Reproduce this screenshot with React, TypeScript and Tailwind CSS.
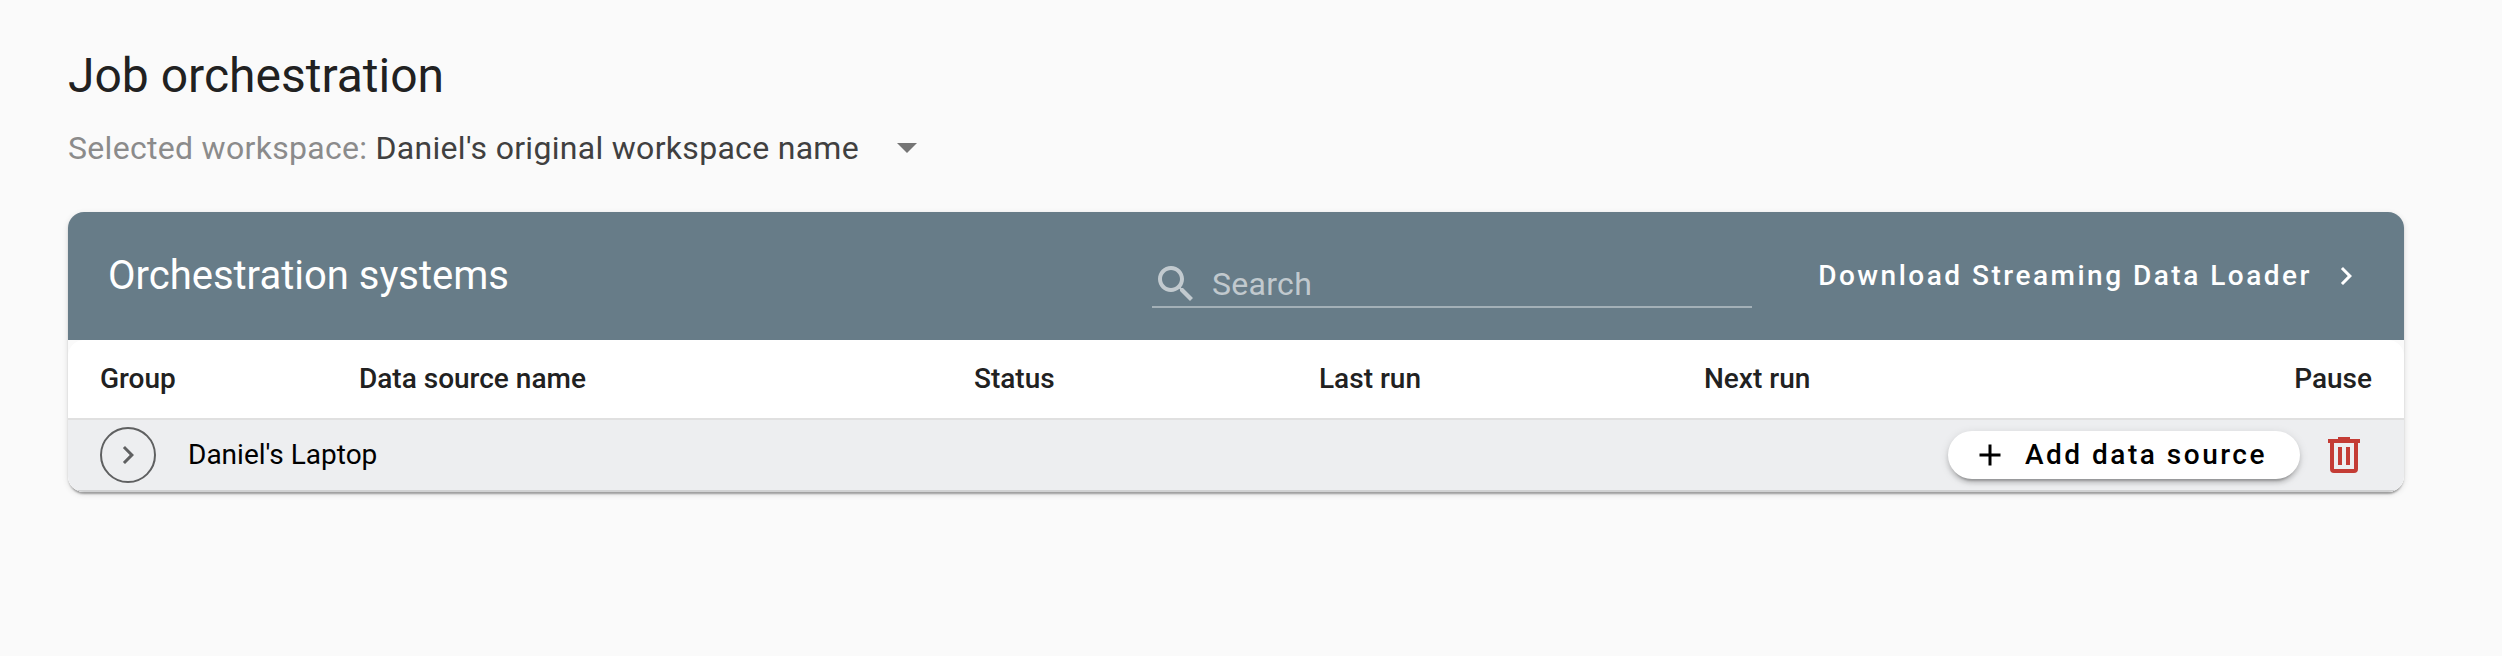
import type { ReactNode } from "react";

function Icon({ path, className }: { path: string; className: string }) {
  return (
    <svg viewBox="0 0 24 24" fill="currentColor" aria-hidden="true" className={className}>
      <path d={path} />
    </svg>
  );
}

const icons = {
  search:
    "M15.5 14h-.79l-.28-.27C15.41 12.59 16 11.11 16 9.5 16 5.91 13.09 3 9.5 3S3 5.91 3 9.5 5.91 16 9.5 16c1.61 0 3.09-.59 4.23-1.57l.27.28v.79l5 4.99L20.49 19l-4.99-5zm-6 0C7.01 14 5 11.99 5 9.5S7.01 5 9.5 5 14 7.01 14 9.5 11.99 14 9.5 14z",
  chevron: "M10 6L8.59 7.41 13.17 12l-4.58 4.59L10 18l6-6z",
  plus: "M19 13h-6v6h-2v-6H5v-2h6V5h2v6h6v2z",
  trash:
    "M9 3v1H4v2h1v13a2 2 0 0 0 2 2h10a2 2 0 0 0 2-2V6h1V4h-5V3H9M7 6h10v13H7V6m2 2v9h2V8H9m4 0v9h2V8h-2z",
};

function HeaderCell({ children, className = "" }: { children: ReactNode; className?: string }) {
  return <div className={`whitespace-nowrap pb-px ${className}`}>{children}</div>;
}

export default function App() {
  return (
    <div className="h-[656px] w-[2502px] bg-[#fafafa] pr-[98px] pl-[68px] pt-11 font-['Roboto',sans-serif] text-[#212121]">
      <h1 className="h-16 text-[48px] leading-[64px]">Job orchestration</h1>

      <div className="mt-4 flex h-12 items-center text-[32px] leading-[48px] tracking-[0.3px]">
        <span className="whitespace-pre text-[#8b8b8b]">Selected workspace: </span>
        <span className="text-[#404040]">Daniel's original workspace name</span>
        <svg viewBox="0 0 20 10" className="ml-[38px] h-[10px] w-5 text-[#757575]" fill="currentColor">
          <path d="M0 0h20L10 10z" />
        </svg>
      </div>

      <section className="mt-10 rounded-[16px] bg-[#fafafa] shadow-[0_4px_2px_-2px_rgba(0,0,0,0.2),0_2px_2px_rgba(0,0,0,0.14),0_2px_6px_rgba(0,0,0,0.12)]">
        <header className="flex h-32 items-center rounded-t-[16px] bg-[#677c88] pr-10 pl-10 text-white">
          <h2 className="w-[1044px] pb-px text-[40px] leading-[64px]">Orchestration systems</h2>
          <div className="mb-8 flex h-[54px] w-[600px] items-center self-end border-b-2 border-white/40 pt-2 text-white/60">
            <Icon path={icons.search} className="h-12 w-12 shrink-0" />
            <span className="ml-3 text-[32px] tracking-[0.3px]">Search</span>
          </div>
          <button className="ml-auto flex items-center text-[28px] font-medium tracking-[2.5px]">
            <span className="pb-px">Download Streaming Data Loader</span>
            <Icon path={icons.chevron} className="ml-4 h-9 w-9" />
          </button>
        </header>

        <div className="overflow-hidden rounded-[16px] bg-white">
          <div className="grid h-20 grid-cols-[259px_615px_345px_385px_1fr_auto] items-center border-b-2 border-[#e0e0e0] px-8 text-[28px] font-medium">
            <HeaderCell>Group</HeaderCell>
            <HeaderCell>Data source name</HeaderCell>
            <HeaderCell>Status</HeaderCell>
            <HeaderCell>Last run</HeaderCell>
            <HeaderCell>Next run</HeaderCell>
            <HeaderCell className="text-right">Pause</HeaderCell>
          </div>
          <div className="flex h-[72px] items-center border-b-2 border-[#d0d1d2] bg-[#edeef0] pr-9 pl-8 text-[28px] text-black">
            <button className="flex h-14 w-14 items-center justify-center rounded-full border-2 border-[#5f6061] text-[#5f6061]">
              <Icon path={icons.chevron} className="h-9 w-9" />
            </button>
            <span className="ml-8 pb-px">Daniel's Laptop</span>
            <button className="ml-auto flex h-12 w-[352px] items-center rounded-full bg-white pl-6 font-medium tracking-[2.5px] shadow-[0_6px_2px_-4px_rgba(0,0,0,0.2),0_4px_4px_rgba(0,0,0,0.14),0_2px_10px_rgba(0,0,0,0.12)]">
              <Icon path={icons.plus} className="h-9 w-9" />
              <span className="ml-[17px] pb-px">Add data source</span>
            </button>
            <button className="ml-5 text-[#c43c35]" aria-label="Delete">
              <Icon path={icons.trash} className="h-12 w-12" />
            </button>
          </div>
        </div>
      </section>
    </div>
  );
}
